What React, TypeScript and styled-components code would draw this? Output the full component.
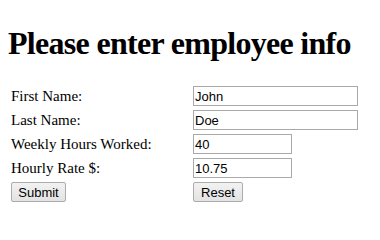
import React from 'react'
import styled, { createGlobalStyle } from 'styled-components'

const GlobalStyle = createGlobalStyle`
  html, body {
    margin: 0;
    background: #ffffff;
  }

  body {
    padding: 8px;
    font-family: "Liberation Serif", "Times New Roman", serif;
    font-size: 16px;
    color: #000;
  }
`

const Heading = styled.h1`
  margin: 17px 0 21px;
  font-family: "Liberation Serif", "Times New Roman", serif;
  font-size: 32px;
  font-weight: bold;
  line-height: 37px;
  letter-spacing: -0.7px;
`

const FormTable = styled.table`
  border-collapse: separate;
  border-spacing: 2px;
`

const LabelCell = styled.td`
  width: 178px;
  padding: 1px;
  vertical-align: middle;
  font-size: 15px;
  white-space: nowrap;
`

const FieldCell = styled.td`
  padding: 1px;
  vertical-align: middle;
`

const TextInput = styled.input<{ $wide?: boolean }>`
  box-sizing: border-box;
  display: block;
  width: ${({ $wide }) => ($wide ? '165px' : '99px')};
  height: 20px;
  margin: 0;
  padding: 1px 1px;
  border: 1px solid #a9a9a9;
  background: #fff;
  font-family: "Liberation Sans", Arial, sans-serif;
  font-size: 13px;
  color: #000;
  outline: none;
`

const Button = styled.button<{ $w: number }>`
  box-sizing: border-box;
  display: block;
  width: ${({ $w }) => $w}px;
  height: 20px;
  margin: 0;
  padding: 0;
  border: 1px solid #acacac;
  border-radius: 2px;
  background: linear-gradient(#f2f2f2, #e3e3e3);
  font-family: "Liberation Sans", Arial, sans-serif;
  font-size: 13px;
  color: #000;
`

const FIELDS = [
  { label: 'First Name:', value: 'John', wide: true },
  { label: 'Last Name:', value: 'Doe', wide: true },
  { label: 'Weekly Hours Worked:', value: '40', wide: false },
  { label: 'Hourly Rate $:', value: '10.75', wide: false },
]

const App: React.FC = () => {
  return (
    <>
      <GlobalStyle />
      <Heading>Please enter employee info</Heading>
      <form onSubmit={(e) => e.preventDefault()}>
        <FormTable>
          <tbody>
            {FIELDS.map(({ label, value, wide }) => (
              <tr key={label}>
                <LabelCell>{label}</LabelCell>
                <FieldCell>
                  <TextInput type="text" defaultValue={value} $wide={wide} />
                </FieldCell>
              </tr>
            ))}
            <tr>
              <LabelCell>
                <Button type="submit" $w={55}>Submit</Button>
              </LabelCell>
              <FieldCell>
                <Button type="reset" $w={50}>Reset</Button>
              </FieldCell>
            </tr>
          </tbody>
        </FormTable>
      </form>
    </>
  )
}

export default App
